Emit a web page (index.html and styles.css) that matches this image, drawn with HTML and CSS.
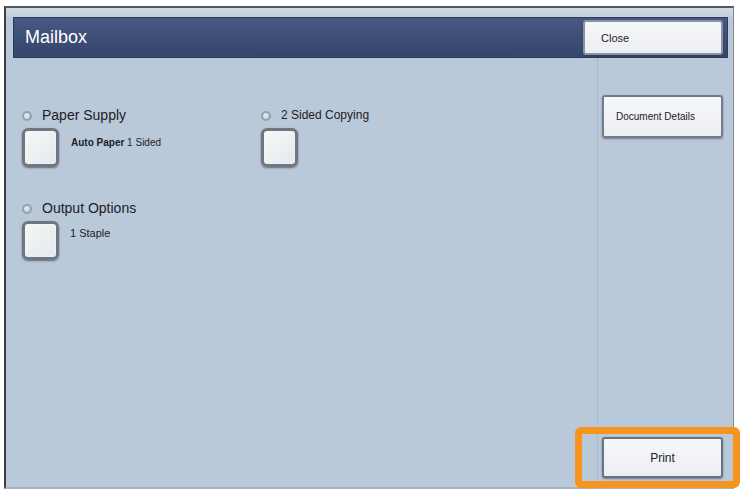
FILE: index.html
```html
<!DOCTYPE html>
<html>
<head>
<meta charset="utf-8">
<link rel="stylesheet" href="styles.css">
</head>
<body>
<div class="frame">
  <div class="header">
    <div class="title">Mailbox</div>
    <div class="btn close-btn">Close</div>
  </div>
  <div class="main">
    <div class="options">
      <div class="opt">
        <div class="opt-head"><span class="radio"></span><span class="opt-label">Paper Supply</span></div>
        <div class="opt-body"><span class="square"></span><span class="opt-value"><b>Auto Paper</b> 1 Sided</span></div>
      </div>
      <div class="opt">
        <div class="opt-head"><span class="radio"></span><span class="opt-label small">2 Sided Copying</span></div>
        <div class="opt-body"><span class="square"></span></div>
      </div>
      <div class="opt">
        <div class="opt-head"><span class="radio"></span><span class="opt-label">Output Options</span></div>
        <div class="opt-body"><span class="square"></span><span class="opt-value staple">1 Staple</span></div>
      </div>
    </div>
    <div class="side">
      <div class="btn doc-btn">Document Details</div>
      <div class="btn print-btn">Print</div>
    </div>
  </div>
</div>
<div class="highlight"></div>
</body>
</html>
```

FILE: styles.css
```css
html, body {
  margin: 0;
  padding: 0;
  background: #ffffff;
  font-family: "Liberation Sans", Arial, sans-serif;
}
body {
  position: relative;
  width: 745px;
  height: 493px;
  overflow: hidden;
}
.frame {
  box-sizing: border-box;
  margin: 6px 0 0 4px;
  width: 730px;
  height: 483px;
  border-left: 2px solid #3d3f44;
  border-top: 2px solid #55585e;
  border-right: 1px solid #7d8590;
  border-bottom: 2px solid #a9b2bc;
  background: linear-gradient(#cfd9e4 0, #c4d0dd 9px, #b9c9da 9px);
  padding: 9px 5px 0 7px;
  display: flex;
  flex-direction: column;
}
.header {
  height: 41px;
  box-sizing: border-box;
  background: linear-gradient(#475982, #3b4c75 60%, #36466d);
  border: 1px solid #2d3a5c;
  display: flex;
  align-items: center;
  justify-content: space-between;
  padding: 0 4px 0 11px;
  flex: none;
}
.title {
  color: #ffffff;
  font-size: 18px;
  margin-top: -1px;
}
.btn {
  box-sizing: border-box;
  background: linear-gradient(#f6f7f9, #eceef2);
  border: 2px solid #747c8c;
  border-radius: 3px;
  box-shadow: 0 1px 2px rgba(40, 50, 70, 0.5);
  color: #222;
  display: flex;
  align-items: center;
}
.close-btn {
  width: 140px;
  height: 35px;
  font-size: 11px;
  padding-left: 16px;
  border-color: #8a93a5;
}
.main {
  flex: 1;
  display: flex;
  min-height: 0;
  margin-right: -5px;
}
.options {
  flex: 1;
  display: grid;
  grid-template-columns: 239px 1fr;
  grid-auto-rows: min-content;
  row-gap: 33px;
  padding: 49px 0 0 9px;
  border-right: 1px solid #a9b8ca;
}
.opt-head {
  display: flex;
  align-items: center;
  height: 16px;
}
.radio {
  box-sizing: border-box;
  width: 10px;
  height: 10px;
  border-radius: 50%;
  border: 2px solid #97a1ae;
  background: radial-gradient(circle at 40% 35%, #e8ecf1, #c2cbd6);
  margin-right: 10px;
  margin-top: 1px;
}
.opt-label {
  font-size: 14px;
  color: #1d2026;
}
.opt-label.small {
  font-size: 12px;
}
.opt-body {
  display: flex;
  align-items: flex-start;
  margin-top: 5px;
}
.square {
  box-sizing: border-box;
  width: 37px;
  height: 39px;
  border-radius: 6px;
  border: 3px solid #6f7682;
  background: linear-gradient(135deg, #f6f8f4, #e3e8ee);
  box-shadow: 0 1px 2px rgba(40, 45, 55, 0.6), inset 0 0 2px rgba(255,255,255,0.9);
}
.opt-value {
  font-size: 10px;
  color: #1e2126;
  margin: 9px 0 0 12px;
}
.opt-value.staple {
  font-size: 11px;
  margin-top: 6px;
  margin-left: 11px;
}
.side {
  box-sizing: border-box;
  width: 135px;
  flex: none;
  display: flex;
  flex-direction: column;
  justify-content: space-between;
  padding: 37px 0 9px 4px;
}
.doc-btn {
  width: 121px;
  height: 43px;
  font-size: 10px;
  padding-left: 12px;
}
.print-btn {
  width: 121px;
  height: 41px;
  font-size: 12px;
  justify-content: center;
  border-color: #6a7282;
}
.highlight {
  position: absolute;
  left: 575px;
  top: 427px;
  width: 165px;
  height: 61px;
  box-sizing: border-box;
  border: 7px solid #f7941d;
  border-radius: 6px;
}
```
